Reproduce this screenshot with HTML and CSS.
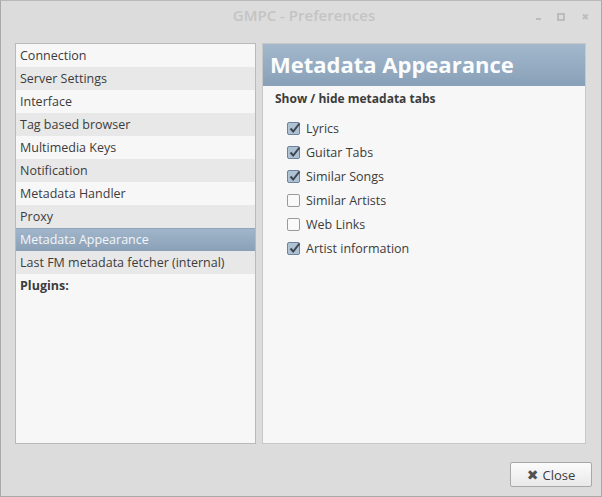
FILE: index.html
```html
<!DOCTYPE html>
<html>
<head>
<meta charset="utf-8">
<link rel="stylesheet" href="styles.css">
</head>
<body>
<div class="window">
  <div class="titlebar">
    <span class="title">GMPC - Preferences</span>
    <div class="wm">
      <span class="wm-min"></span>
      <span class="wm-max"></span>
      <span class="wm-close">✖</span>
    </div>
  </div>
  <div class="content">
    <div class="sidebar">
      <div class="row">Connection</div>
      <div class="row alt">Server Settings</div>
      <div class="row">Interface</div>
      <div class="row alt">Tag based browser</div>
      <div class="row">Multimedia Keys</div>
      <div class="row alt">Notification</div>
      <div class="row">Metadata Handler</div>
      <div class="row alt">Proxy</div>
      <div class="row sel">Metadata Appearance</div>
      <div class="row alt">Last FM metadata fetcher (internal)</div>
      <div class="row bold">Plugins:</div>
    </div>
    <div class="main">
      <div class="header">Metadata Appearance</div>
      <div class="section">Show / hide metadata tabs</div>
      <div class="checks">
        <label class="check"><span class="box on"><svg viewBox="0 0 13 13" width="13" height="13"><path d="M2.5 6.5 L5.2 9.5 L11.5 1.5" fill="none" stroke="#3c4650" stroke-width="2"/></svg></span>Lyrics</label>
        <label class="check"><span class="box on"><svg viewBox="0 0 13 13" width="13" height="13"><path d="M2.5 6.5 L5.2 9.5 L11.5 1.5" fill="none" stroke="#3c4650" stroke-width="2"/></svg></span>Guitar Tabs</label>
        <label class="check"><span class="box on"><svg viewBox="0 0 13 13" width="13" height="13"><path d="M2.5 6.5 L5.2 9.5 L11.5 1.5" fill="none" stroke="#3c4650" stroke-width="2"/></svg></span>Similar Songs</label>
        <label class="check"><span class="box"></span>Similar Artists</label>
        <label class="check"><span class="box"></span>Web Links</label>
        <label class="check"><span class="box on"><svg viewBox="0 0 13 13" width="13" height="13"><path d="M2.5 6.5 L5.2 9.5 L11.5 1.5" fill="none" stroke="#3c4650" stroke-width="2"/></svg></span>Artist information</label>
      </div>
    </div>
  </div>
  <div class="footer">
    <button class="btn"><span class="x">✖</span>Close</button>
  </div>
</div>
</body>
</html>
```
FILE: styles.css
```css
html, body { margin: 0; padding: 0; }
body {
  width: 602px; height: 497px; overflow: hidden;
  font-family: "Open Sans", "DejaVu Sans", sans-serif;
  font-size: 12.5px;
  color: #3c3c3c;
  background: #dcdcdc;
}
.window {
  box-sizing: border-box;
  width: 602px; height: 497px;
  border: 1px solid #aaaaaa;
  border-top-color: #b8b8b8;
  background: #dcdcdc;
  display: flex; flex-direction: column;
}
.titlebar {
  height: 29px;
  position: relative;
  display: flex; align-items: center; justify-content: center;
}
.title {
  color: #c4c4c4; font-size: 15px; font-weight: 600;
  margin-top: -2px; margin-left: 6px;
}
.wm {
  position: absolute; right: 12px; top: 11px;
  display: flex; gap: 16px; align-items: center;
}
.wm span { display: block; }
.wm-min { width: 5px; height: 2px; background: #bcbcbc; margin-top: 5px; }
.wm-max { width: 4px; height: 4px; border: 2px solid #bcbcbc; }
.wm-close { color: #bcbcbc; font-size: 9px; line-height: 9px; }
.content {
  display: flex; gap: 6px;
  padding: 13px 15px 0 14px;
  height: 401px;
}
.sidebar {
  width: 239px;
  border: 1px solid #b9b9b9;
  background: #f7f7f7;
}
.row {
  height: 23px; line-height: 23px;
  padding-left: 4px;
  white-space: nowrap;
  color: #3c3c3c;
}
.row.alt { background: #e8e8e8; }
.row.sel {
  background: linear-gradient(#a1b6cb, #8aa0b7);
  color: #f4f6f8;
  border-top: 1px solid #8ea5bd;
  height: 22px; line-height: 22px;
}
.row.bold { font-weight: bold; }
.main {
  width: 322px;
  border: 1px solid #c8c8c8;
  background: #f7f7f7;
}
.header {
  height: 42px; line-height: 41px;
  background: linear-gradient(#a3b8cc, #88a0b8);
  color: #fbfcfd;
  font-size: 22px; font-weight: bold;
  padding-left: 7px;
}
.section {
  font-weight: bold; font-size: 12px;
  padding: 4px 0 0 12px;
  height: 21px;
}
.checks {
  padding: 5px 0 0 24px;
  display: flex; flex-direction: column;
}
.check {
  display: flex; align-items: center;
  height: 24px;
  gap: 6px;
}
.box {
  box-sizing: border-box;
  width: 13px; height: 13px;
  border: 1px solid #9a9a9a;
  border-radius: 2px;
  background: #f9f9f9;
  display: flex; align-items: center; justify-content: center;
  position: relative;
}
.box.on { background: #aec2d4; border-color: #6f8396; }
.box svg { position: absolute; left: 0; top: -1px; }
.footer {
  flex: 1;
  display: flex; justify-content: flex-end; align-items: flex-start;
  padding: 18px 9px 0 0;
}
.btn {
  box-sizing: border-box;
  width: 82px; height: 25px;
  border: 1px solid #a8a8a8; border-radius: 2px;
  background: linear-gradient(#fbfbfb, #e9e9e9);
  font-family: inherit; font-size: 13px; color: #3c3c3c;
  display: flex; align-items: center; justify-content: center; gap: 4px;
  padding: 0;
}
.x { color: #505050; font-size: 14px; line-height: 14px; }
```
